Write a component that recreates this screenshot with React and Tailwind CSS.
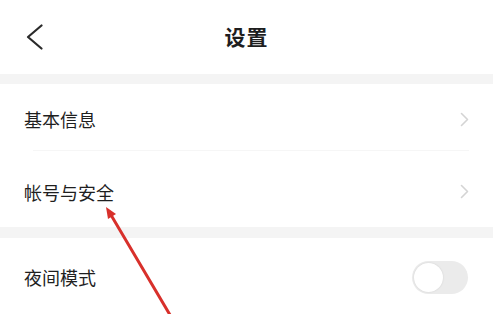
export default function App() {
  const font = { fontFamily: '"Noto Sans CJK SC", "Noto Sans", sans-serif' };

  return (
    <div className="relative w-[493px] h-[314px] overflow-hidden bg-white" style={font}>
      {/* HEADER */}
      <div className="flex items-center h-[74px]">
        <div className="w-[70px] pl-[26px] flex items-center">
          <svg width="18" height="26" viewBox="0 0 18 26" fill="none">
            <path d="M15.5 1.5 L2 13 L15.5 24.5" stroke="#2a2a2a" strokeWidth="2.2" strokeLinecap="round" strokeLinejoin="round" />
          </svg>
        </div>
        <div className="flex-1 text-center text-[21px] font-bold text-[#1e1e1e] leading-none tracking-[1px] pb-[2px]">设置</div>
        <div className="w-[70px]" />
      </div>

      <div className="h-[10px] bg-[#f4f4f4]" />

      {/* GROUP 1 */}
      <div className="flex items-center justify-between h-[66px] pl-[24px] pr-[24px] pt-[4px]">
        <span className="text-[18px] text-[#1f1f1f] leading-none">基本信息</span>
        <svg width="9" height="15" viewBox="0 0 9 15" fill="none">
          <path d="M1.5 1.5 L7.5 7.5 L1.5 13.5" stroke="#d4d4d4" strokeWidth="1.6" strokeLinecap="round" strokeLinejoin="round" />
        </svg>
      </div>
      <div className="h-px bg-[#f6f6f6] ml-[33px] mr-[24px]" />
      <div className="flex items-center justify-between h-[76px] pl-[24px] pr-[24px] pt-[5px]">
        <span className="text-[18px] text-[#1f1f1f] leading-none">帐号与安全</span>
        <svg width="9" height="15" viewBox="0 0 9 15" fill="none">
          <path d="M1.5 1.5 L7.5 7.5 L1.5 13.5" stroke="#d4d4d4" strokeWidth="1.6" strokeLinecap="round" strokeLinejoin="round" />
        </svg>
      </div>

      <div className="h-[11px] bg-[#f4f4f4]" />

      {/* GROUP 2 */}
      <div className="flex items-center justify-between h-[78px] pl-[24px] pr-[25px]">
        <span className="text-[18px] text-[#1f1f1f] leading-none">夜间模式</span>
        <div className="w-[56px] h-[33px] rounded-full bg-[#ebebeb] p-[2px] flex items-center">
          <div className="w-[29px] h-[29px] rounded-full bg-white shadow-[0_0_2px_rgba(0,0,0,0.12)]" />
        </div>
      </div>

      {/* ANNOTATION ARROW */}
      <svg className="absolute left-0 top-0 pointer-events-none" width="493" height="314" viewBox="0 0 493 314">
        <line x1="173" y1="320" x2="111" y2="215" stroke="#d8302b" strokeWidth="3" strokeLinecap="round" />
        <path d="M106 207 L116 214 L108 219 Z" fill="#d8302b" />
      </svg>
    </div>
  );
}
